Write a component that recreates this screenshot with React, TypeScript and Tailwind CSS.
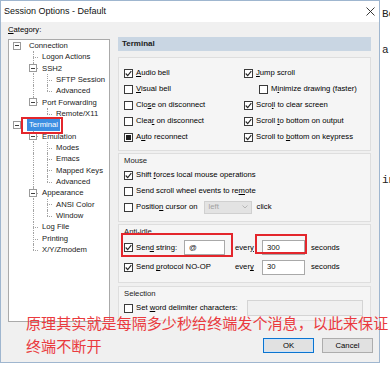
import type { ReactNode } from 'react';

type CheckState = 'on' | 'off' | 'mixed';

interface TreeNode {
  label: string;
  level: 0 | 1 | 2;
  exp?: boolean;
  lines?: number[];
  tee?: number;
  last?: boolean;
  sel?: boolean;
}

// x positions are relative to the tree's inner left edge
const tree: TreeNode[] = [
  { label: 'Connection', level: 0, exp: true },
  { label: 'Logon Actions', level: 1, tee: 24 },
  { label: 'SSH2', level: 1, exp: true, tee: 24 },
  { label: 'SFTP Session', level: 2, lines: [24], tee: 38 },
  { label: 'Advanced', level: 2, lines: [24], tee: 38, last: true },
  { label: 'Port Forwarding', level: 1, exp: true, tee: 24, last: true },
  { label: 'Remote/X11', level: 2, tee: 38, last: true },
  { label: 'Terminal', level: 0, exp: true, sel: true },
  { label: 'Emulation', level: 1, exp: true, tee: 24 },
  { label: 'Modes', level: 2, lines: [24], tee: 38 },
  { label: 'Emacs', level: 2, lines: [24], tee: 38 },
  { label: 'Mapped Keys', level: 2, lines: [24], tee: 38 },
  { label: 'Advanced', level: 2, lines: [24], tee: 38, last: true },
  { label: 'Appearance', level: 1, exp: true, tee: 24 },
  { label: 'ANSI Color', level: 2, lines: [24], tee: 38 },
  { label: 'Window', level: 2, lines: [24], tee: 38, last: true },
  { label: 'Log File', level: 1, tee: 24 },
  { label: 'Printing', level: 1, tee: 24 },
  { label: 'X/Y/Zmodem', level: 1, tee: 24, last: true },
];

const indent = [18, 31, 45];

function Mn({ text }: { text: string }) {
  const i = text.indexOf('&');
  if (i < 0) return <>{text}</>;
  return (
    <>
      {text.slice(0, i)}
      <span className="underline decoration-[0.5px] underline-offset-[1px]">{text[i + 1]}</span>
      {text.slice(i + 2)}
    </>
  );
}

function Box({ state }: { state: CheckState }) {
  return (
    <span className="flex h-[9px] w-[9px] shrink-0 items-center justify-center border border-[#3a3a3a] bg-white">
      {state === 'on' && (
        <svg width="7" height="7" viewBox="0 0 7 7">
          <path d="M0.7 3.5 L2.7 5.6 L6.3 1.1" fill="none" stroke="#262626" strokeWidth="1.1" />
        </svg>
      )}
      {state === 'mixed' && <span className="h-[5px] w-[5px] bg-[#1e1e1e]" />}
    </span>
  );
}

function Check({ label, state = 'off', className = '' }: { label: string; state?: CheckState; className?: string }) {
  return (
    <div className={`flex h-[16px] items-center gap-[3px] whitespace-nowrap ${className}`}>
      <Box state={state} />
      <span>
        <Mn text={label} />
      </span>
    </div>
  );
}

function Group({ title, className = '', children }: { title?: string; className?: string; children: ReactNode }) {
  return (
    <div className={`mr-[2px] border border-[#dedede] bg-[#f5f5f5] pl-[5px] ${className}`}>
      {title && <div className="h-[13px] pt-px leading-[12px] text-[#1a1a1a]">{title}</div>}
      {children}
    </div>
  );
}

function Field({ value = '', className = '' }: { value?: string; className?: string }) {
  return (
    <span className={`flex h-[15px] shrink-0 items-center border border-[#a9a9a9] bg-white pl-[4px] text-[#111] ${className}`}>
      {value}
    </span>
  );
}

function TreeRow({ node }: { node: TreeNode }) {
  const expX = node.level === 0 ? 8 : 24;
  return (
    <div className="relative flex h-[11.35px] items-center whitespace-nowrap" style={{ paddingLeft: indent[node.level] }}>
      {(node.lines ?? []).map((x) => (
        <span key={x} className="absolute top-0 bottom-0 border-l border-dotted border-[#a3a3a3]" style={{ left: x }} />
      ))}
      {node.tee !== undefined && (
        <>
          <span
            className={`absolute top-0 border-l border-dotted border-[#a3a3a3] ${node.last ? 'h-1/2' : 'bottom-0'}`}
            style={{ left: node.tee }}
          />
          <span className="absolute top-1/2 w-[5px] border-t border-dotted border-[#a3a3a3]" style={{ left: node.tee }} />
        </>
      )}
      {node.exp && (
        <span
          className="absolute top-1/2 flex h-[8px] w-[8px] -translate-y-1/2 items-center justify-center border border-[#9a9a9a] bg-white"
          style={{ left: expX - 4 }}
        >
          <span className="h-px w-[4px] bg-[#404040]" />
        </span>
      )}
      <span className={node.sel ? 'bg-[#3b8ee2] px-[2px] text-white' : 'px-[2px] text-[#1a1a1a]'}>{node.label}</span>
    </div>
  );
}

export default function App() {
  return (
    <div className="relative flex h-[365px] w-[390px] overflow-hidden bg-white font-['Liberation_Sans',Arial,sans-serif] text-[7.7px] text-black">
      {/* dialog */}
      <div className="flex h-[363px] w-[380px] shrink-0 flex-col border border-[#9fb6cf] bg-[#f0f0f0]">
        <div className="flex h-[21px] shrink-0 items-center justify-between bg-white pr-[4px] pl-[3px]">
          <span className="text-[9px] text-[#111]">Session Options - Default</span>
          <svg width="9" height="9" viewBox="0 0 9 9">
            <path d="M0.5 0.5 L8.5 8.5 M8.5 0.5 L0.5 8.5" stroke="#222" strokeWidth="0.9" />
          </svg>
        </div>

        <div className="flex flex-1 pl-[7px]">
          {/* category tree */}
          <div className="flex w-[102px] shrink-0 flex-col">
            <div className="mt-px mb-[2px] h-[14px] leading-[14px]">
              <Mn text="&Category:" />
            </div>
            <div className="h-[283px] border border-[#aaaaaa] bg-white">
              {tree.map((n, i) => (
                <TreeRow key={i} node={n} />
              ))}
            </div>
          </div>

          {/* settings */}
          <div className="ml-[8px] flex w-[255px] shrink-0 flex-col pt-[15px]">
            <div className="mr-[2px] flex h-[14px] items-center bg-[#c9d6e3] pl-[4px] text-[8px] font-bold text-[#1a1a1a]">
              Terminal
            </div>

            <Group className="mt-[6px] h-[94px] pt-[7px]">
              <div className="grid grid-cols-[120px_1fr]">
                <Check label="&Audio bell" state="on" />
                <Check label="&Jump scroll" state="on" />
                <Check label="&Visual bell" />
                <Check label="M&inimize drawing (faster)" className="pl-[15px]" />
                <Check label="Clo&se on disconnect" />
                <Check label="Scro&ll to clear screen" state="on" />
                <Check label="Clea&r on disconnect" />
                <Check label="Scroll &to bottom on output" state="on" />
                <Check label="A&uto reconnect" state="mixed" />
                <Check label="Scroll to &bottom on keypress" state="on" />
              </div>
            </Group>

            <Group title="Mouse" className="mt-[2px] h-[69px]">
              <Check label="Shift &forces local mouse operations" state="on" />
              <Check label="Send scroll wheel events to re&mote" />
              <div className="flex h-[16px] items-center">
                <Check label="Positio&n cursor on" />
                <span className="ml-[6px] flex h-[13px] w-[48px] items-center justify-between border border-[#d0d0d0] bg-[#e3e3e3] pr-[3px] pl-[4px] text-[#a0a0a0]">
                  left
                  <svg width="6" height="4" viewBox="0 0 6 4">
                    <path d="M0.5 0.5 L3 3 L5.5 0.5" fill="none" stroke="#b0b0b0" strokeWidth="0.9" />
                  </svg>
                </span>
                <span className="ml-[5px]">click</span>
              </div>
            </Group>

            <Group title="Anti-idle" className="mt-[2px] h-[59px]">
              <div className="flex h-[19px] items-center">
                <Check label="Sen&d string:" state="on" className="w-[60px]" />
                <Field value="@" className="w-[41px]" />
                <span className="ml-[10px] w-[27px]">
                  <Mn text="ever&y" />
                </span>
                <Field value="300" className="w-[43px]" />
                <span className="ml-[6px]">seconds</span>
              </div>
              <div className="flex h-[20px] items-center">
                <Check label="Send &protocol NO-OP" state="on" className="w-[111px]" />
                <span className="w-[27px]">
                  <Mn text="ever&y" />
                </span>
                <Field value="30" className="w-[43px]" />
                <span className="ml-[6px]">seconds</span>
              </div>
            </Group>

            <Group title="Selection" className="mt-[3px] h-[35px]">
              <div className="flex h-[16px] items-center">
                <Check label="Set &word delimiter characters:" className="w-[123px]" />
                <span className="h-[16px] w-[116px] border border-[#d4d4d4] bg-[#f0f0f0]" />
              </div>
            </Group>

            <div className="mt-[17px] flex justify-end gap-[8px]">
              <button className="h-[15px] w-[51px] border border-[#0a74d0] bg-[#e1e1e1] text-[7.7px] text-black shadow-[inset_0_0_0_1px_#cfe3f7]">
                OK
              </button>
              <button className="h-[15px] w-[51px] border border-[#adadad] bg-[#e1e1e1] text-[7.7px] text-black">
                Cancel
              </button>
            </div>
          </div>
        </div>
      </div>

      {/* background terminal window peeking out */}
      <div className="flex flex-col pl-[2px] font-['Liberation_Mono',monospace] text-[11px] leading-[12px] text-[#222]">
        <span className="mt-[8px]">Be</span>
        <span className="mt-[24px]">a:</span>
        <span className="mt-[118px]">in</span>
      </div>

      {/* annotations */}
      <div className="absolute top-[117px] left-[21px] h-[17px] w-[42px] border-2 border-[#e3262c]" />
      <div className="absolute top-[233px] left-[121px] h-[24px] w-[112px] border-2 border-[#e3262c]" />
      <div className="absolute top-[234px] left-[255px] h-[20px] w-[52px] border-2 border-[#e3262c]" />
      <div className="absolute top-[311px] left-[26px] font-['Noto_Sans_CJK_SC',sans-serif] text-[15.1px] leading-[23px] whitespace-nowrap text-[#ea3a3e]">
        原理其实就是每隔多少秒给终端发个消息，以此来保证
        <br />
        终端不断开
      </div>
    </div>
  );
}
